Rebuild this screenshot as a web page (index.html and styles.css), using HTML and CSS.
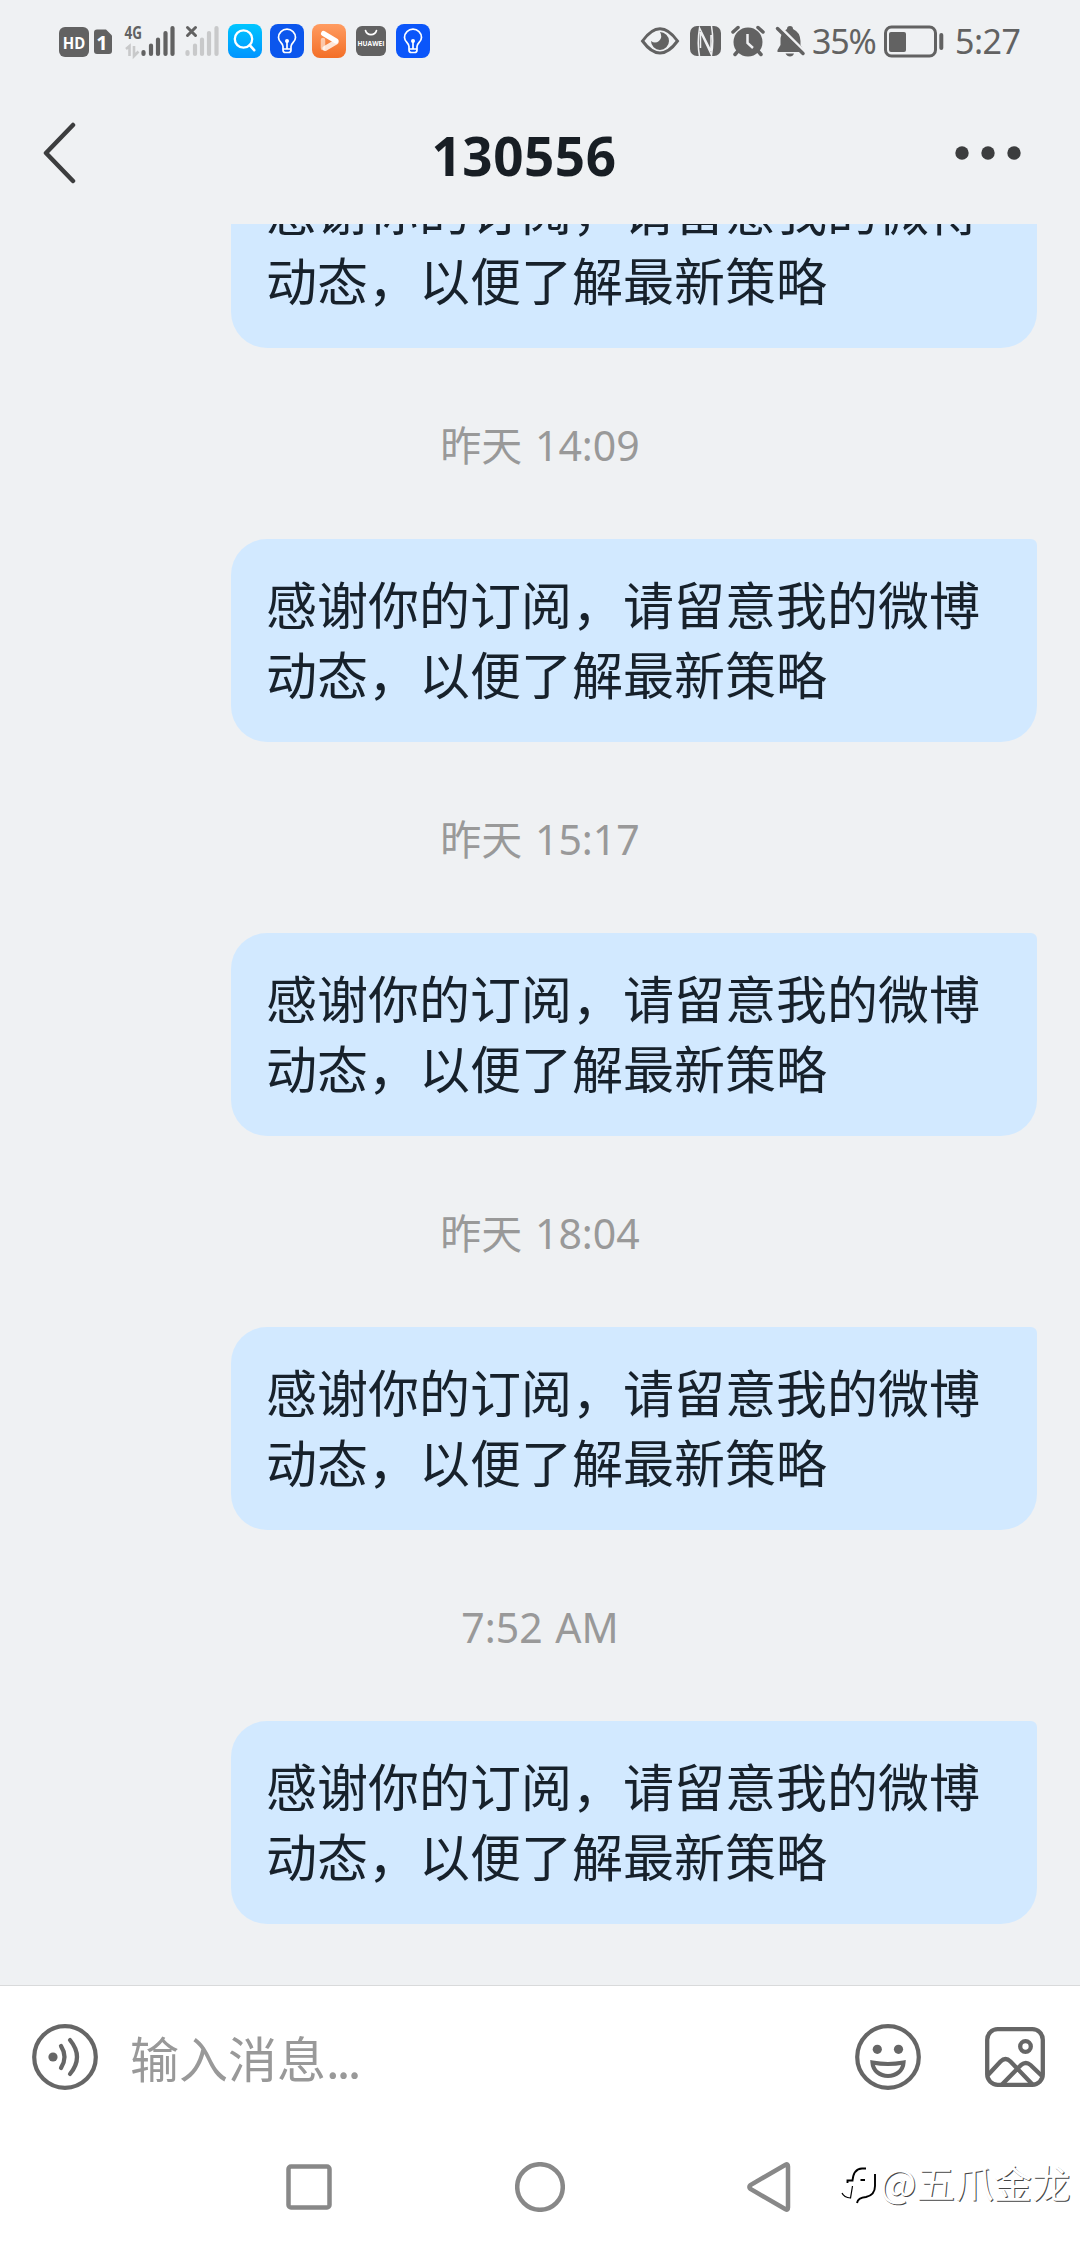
FILE: index.html
```
<!DOCTYPE html>
<html lang="zh-CN">
<head>
<meta charset="utf-8">
<title>130556</title>
<link rel="stylesheet" href="styles.css">
</head>
<body>
<div class="screen">
  <header class="status">
    <div class="status-left">
      <svg width="54" height="60" viewBox="59 10 54 60">
        <rect x="59" y="26" width="30" height="30" rx="6" fill="#626262"/>
        <text x="74" y="47.5" text-anchor="middle" class="hd" textLength="22.500" lengthAdjust="spacingAndGlyphs">HD</text>
        <path d="M97 28.500H106L112 34.500V50Q112 53 109 53H97Q94 53 94 50V31.500Q94 28.500 97 28.500Z" fill="#626262"/>
        <text x="102" y="48.500" text-anchor="middle" class="sim">1</text>
      </svg>
      <svg class="signal" width="51" height="60" viewBox="124 10 51 60">
        <text x="124.500" y="38" class="net" textLength="17.500" lengthAdjust="spacingAndGlyphs">4G</text>
        <path d="M126 48l3.500-3V55M134 45V55l4.500-4.500" fill="none" stroke="#c8c9ca" stroke-width="2.600"/>
        <path d="M143.500 51v2M151 44.500V53M158 38.500V53M165.500 32V53M172.500 27V53" stroke="#626262" stroke-width="4.200" stroke-linecap="round"/>
      </svg>
      <svg class="signal-none" width="34" height="60" viewBox="185 10 34 60">
        <path d="M187.500 26.500l8 8m0-8l-8 8" stroke="#626262" stroke-width="3" stroke-linecap="round"/>
        <path d="M187.500 51v2M195 44.500V53M202 38.500V53M209 32V53M216.500 27V53" stroke="#c8c9ca" stroke-width="4.200" stroke-linecap="round"/>
      </svg>
      <svg class="app-first" width="34" height="34" viewBox="0 0 34 34">
        <defs><linearGradient id="sky" x2="0" y2="1"><stop stop-color="#00c6ff"/><stop offset="1" stop-color="#0094ff"/></linearGradient></defs>
        <rect width="34" height="34" rx="8" fill="url(#sky)"/>
        <circle cx="15.500" cy="15" r="8.700" fill="none" stroke="#fff" stroke-width="2.300"/>
        <path d="M21.700 21.200l4.500 5" stroke="#fff" stroke-width="2.600" stroke-linecap="round"/>
      </svg>
      <svg class="app" width="34" height="34" viewBox="0 0 34 34">
        <rect width="34" height="34" rx="8" fill="#0b56ed"/>
        <path d="M13 22.500C13 18.500 8.500 18 8.500 13.500a8.500 8.300 0 0 1 17 0C25.500 18 21 18.500 21 22.500V26q0 2.500-2.500 2.500h-3Q13 28.500 13 26ZM13 25h8M17 18v7" fill="none" stroke="#fff" stroke-width="1.700"/>
        <circle cx="17" cy="17" r="2" fill="#fff"/>
      </svg>
      <svg class="app" width="34" height="34" viewBox="0 0 34 34">
        <defs><linearGradient id="orange" x2="0" y2="1"><stop stop-color="#ff9c61"/><stop offset="1" stop-color="#f36f27"/></linearGradient></defs>
        <rect width="34" height="34" rx="8" fill="url(#orange)"/>
        <path d="M11 16v8" stroke="#fff" stroke-opacity=".55" stroke-width="4.500" stroke-linecap="round"/>
        <path d="M24 18l-11 6.500" stroke="#fff" stroke-opacity=".8" stroke-width="5" stroke-linecap="round"/>
        <path d="M11.500 9.500L24 17" stroke="#fff" stroke-width="5" stroke-linecap="round"/>
      </svg>
      <svg class="store" width="30" height="30" viewBox="0 0 30 30">
        <rect width="30" height="30" rx="6" fill="#626262"/>
        <path d="M9.500 4.500a5.700 5.500 0 0 0 11 0" fill="none" stroke="#fff" stroke-width="1.700" stroke-linecap="round"/>
        <text x="15" y="20" text-anchor="middle" class="brand" textLength="27" lengthAdjust="spacingAndGlyphs">HUAWEI</text>
      </svg>
      <svg class="store" width="34" height="34" viewBox="0 0 34 34">
        <rect width="34" height="34" rx="8" fill="#0b56fa"/>
        <path d="M13 22.500C13 18.500 8.500 18 8.500 13.500a8.500 8.300 0 0 1 17 0C25.500 18 21 18.500 21 22.500V26q0 2.500-2.500 2.500h-3Q13 28.500 13 26ZM13 25h8M17 18v7" fill="none" stroke="#fff" stroke-width="1.700"/>
        <circle cx="17" cy="17" r="2" fill="#fff"/>
      </svg>
    </div>
    <div class="status-right">
      <svg width="168" height="60" viewBox="640 10 168 60">
        <path d="M642.500 40Q660 15.500 677.500 40Q660 64 642.500 40Z" fill="none" stroke="#626262" stroke-width="3"/>
        <path d="M660 31a9 9 0 1 1-9 9q4 3 8 0q4-4 1-9Z" fill="#626262"/>
        <rect x="690" y="25" width="31" height="30" rx="7" fill="#626262"/>
        <path d="M699.500 55Q697 42 699.500 27L711 50V34M711.500 25Q714 40 711.500 54L700.500 31V47" fill="none" stroke="#eff0f2" stroke-width="1.500"/>
        <circle cx="748" cy="41" r="14.500" fill="#626262"/>
        <path d="M733 31l5-4.500M763 31l-5-4.500M738 50l-3 3.500M758 50l3 3.500" stroke="#626262" stroke-width="3.500" stroke-linecap="round"/>
        <path d="M747.500 33v9l5.500 5" fill="none" stroke="#eff0f2" stroke-width="2.500"/>
        <path d="M787 28a3 3 0 0 1 6 0q7 3 7.500 12v4l3 5v2h-26v-2l3-5V37q1-6 6.500-9ZM785.500 52.500h8.500q-1 3-4 3t-4.500-3Z" fill="#626262"/>
        <path d="M779.500 25.500l25 25" stroke="#eff0f2" stroke-width="3"/>
        <path d="M777.500 27.500l25.500 25" stroke="#626262" stroke-width="3.500" stroke-linecap="round"/>
      </svg>
      <span class="percent">35%</span>
      <svg class="battery" width="60" height="60" viewBox="884 10 60 60">
        <rect x="885.500" y="26" width="50" height="29" rx="6" fill="none" stroke="#626262" stroke-width="3"/>
        <rect x="889" y="31" width="17" height="20" rx="2" fill="#626262"/>
        <path d="M941.300 34v13" stroke="#626262" stroke-width="4" stroke-linecap="round"/>
      </svg>
      <span class="clock">5:27</span>
    </div>
  </header>
  <div class="titlebar">
    <svg width="34" height="62" viewBox="0 0 34 62"><path d="M31 3L4 31L31 59" fill="none" stroke="#3c3d3e" stroke-width="4.500" stroke-linecap="round" stroke-linejoin="round"/></svg>
    <h1>130556</h1>
    <svg width="66" height="14" viewBox="0 0 66 14" fill="#3c3d3e"><circle cx="7" cy="7" r="6.700"/><circle cx="33" cy="7" r="6.700"/><circle cx="59" cy="7" r="6.700"/></svg>
  </div>
  <main class="chat">
    <div class="bubble">感谢你的订阅，请留意我的微博动态，以便了解最新策略</div>
    <time>昨天 14:09</time>
    <div class="bubble">感谢你的订阅，请留意我的微博动态，以便了解最新策略</div>
    <time>昨天 15:17</time>
    <div class="bubble">感谢你的订阅，请留意我的微博动态，以便了解最新策略</div>
    <time>昨天 18:04</time>
    <div class="bubble">感谢你的订阅，请留意我的微博动态，以便了解最新策略</div>
    <time>7:52 AM</time>
    <div class="bubble">感谢你的订阅，请留意我的微博动态，以便了解最新策略</div>
  </main>
  <footer class="composer">
    <svg width="66" height="66" viewBox="0 0 66 66" fill="none" stroke="#666" stroke-width="4.200" stroke-linecap="round">
      <circle cx="33" cy="33" r="30.800"/><circle cx="21" cy="33" r="4.600" fill="#666" stroke="none"/>
      <path d="M29 22q7 11 0 22M38 16q14 17 0 34"/>
    </svg>
    <span class="placeholder">输入消息<span class="dots">...</span></span>
    <svg width="66" height="66" viewBox="0 0 66 66" fill="none" stroke="#666" stroke-width="4.200">
      <circle cx="33" cy="33" r="30.800"/><circle cx="22.300" cy="25.300" r="4.600" fill="#666" stroke="none"/><circle cx="43.500" cy="25.300" r="4.600" fill="#666" stroke="none"/>
      <path d="M17.500 38.500q15.500 3 31 0C48 47 41 52 33 52S18 47 17.500 38.500Z"/>
    </svg>
    <svg class="picture" width="60" height="60" viewBox="0 0 60 60" fill="none" stroke="#666" stroke-width="4.300">
      <rect x="2.200" y="2.200" width="55.600" height="55.600" rx="10.500"/><circle cx="40.500" cy="19.500" r="5.300"/>
      <path d="M3 48L15.500 34.500q5-5 10 0L47.500 57.500M17 57.500L36 38q5-4 9.500 0L57 49"/>
    </svg>
  </footer>
  <nav class="nav">
    <svg width="46" height="46" viewBox="0 0 46 46"><rect x="2.500" y="2.500" width="41" height="41" rx="2.500" class="key"/></svg>
    <svg width="50" height="50" viewBox="0 0 50 50"><circle cx="25" cy="25" r="22.800" class="key"/></svg>
    <svg width="44" height="50" viewBox="0 0 44 50"><path d="M38.500 2.700Q41 1.500 41 4.500V45.500Q41 48.500 38.500 47.300L3.500 27Q1.200 25 3.500 23Z" class="key"/></svg>
    <div class="watermark">
      <svg width="38" height="40" viewBox="0 0 38 40" fill="none" stroke="#000">
        <path d="M7.500 17V14.500H12.500Q13.500 3 22 2.500H26M20.500 14H25M35 8V20Q35 29 26 31Q18 31.500 17 37" stroke-width="1.900"/>
        <path d="M2 27Q4 31.500 10.500 32L12.500 20" stroke-width="1.200"/>
      </svg><span>@五爪金龙</span>
    </div>
  </nav>
</div>
</body>
</html>
```
FILE: styles.css
```
* { box-sizing: border-box; }
body { margin: 0; background: #eff1f3; font-family: "Noto Sans CJK SC", sans-serif; }
svg { display: block; flex: none; }
.screen { width: 1080px; height: 2244px; display: flex; flex-direction: column; overflow: hidden; }

.status { height: 82px; flex: none; display: flex; justify-content: space-between; padding: 0 61px 0 59px; color: #626262; }
.status-left, .status-right { display: flex; align-items: center; }
.hd { font: bold 16.500px "Open Sans", sans-serif; fill: #fff; }
.sim { font: bold 20px "Open Sans", sans-serif; fill: #fff; }
.net { font: bold 18px "Open Sans", sans-serif; fill: #626262; }
.brand { font: bold 6.500px "Open Sans", sans-serif; fill: #fff; }
.signal { margin-left: 11px; }
.signal-none { margin-left: 10px; }
.app-first { margin-left: 9px; }
.app { margin-left: 8px; }
.store { margin-left: 10px; }
.percent, .clock { font: 34px/60px "Noto Sans", sans-serif; white-space: nowrap; }
.percent { width: 66px; margin-left: 4px; letter-spacing: -1.2px; }
.battery { margin-left: 6px; }
.clock { width: 64px; margin-left: 11px; letter-spacing: -0.5px; }

.titlebar { height: 142px; flex: none; display: flex; align-items: center; justify-content: space-between; padding: 0 59px 0 42px; }
.titlebar h1 { margin: 5px 0 0 17px; font: bold 53px/62px "Noto Sans", sans-serif; letter-spacing: 0.5px; color: #181e24; }

.chat { flex: 1; min-height: 0; overflow: hidden; display: flex; flex-direction: column; justify-content: flex-end; padding: 0 43px 61px 231px; }
.bubble { flex: none; height: 203px; padding: 29px 37px 29px 35px; font-size: 51px; line-height: 70px; color: #17212b; background: #d2e9ff; border-radius: 36px 6px 36px 36px; }
.chat time { flex: none; height: 191px; margin: 0 -43px 0 -231px; text-align: center; font-family: "Noto Sans", "Noto Sans CJK SC", sans-serif; font-size: 41px; line-height: 195px; word-spacing: 2px; color: #999; }

.composer { height: 146px; flex: none; display: flex; align-items: center; padding: 0 35px 4px 32px; background: #fff; border-top: 1px solid #d9dadb; }
.placeholder { flex: 1; margin: 1px 0 0 32px; font-size: 49px; line-height: 70px; color: #999; }
.dots { letter-spacing: -2.8px; }
.picture { margin-left: 64px; }

.nav { height: 113px; flex: none; display: flex; align-items: center; padding: 0 4px 2px 286px; background: #fff; }
.nav svg + svg { margin-left: 183px; }
.nav svg + svg + svg { margin-left: 182px; }
.key { fill: none; stroke: #888; stroke-width: 4.500px; }
.watermark { display: flex; align-items: center; margin: -2px 0 0 49px; }
.watermark span { margin: -9px 0 0 2px; font-size: 38.500px; line-height: 50px; color: #fff; text-shadow: 1px 1px 0 #444; white-space: nowrap; }
```
